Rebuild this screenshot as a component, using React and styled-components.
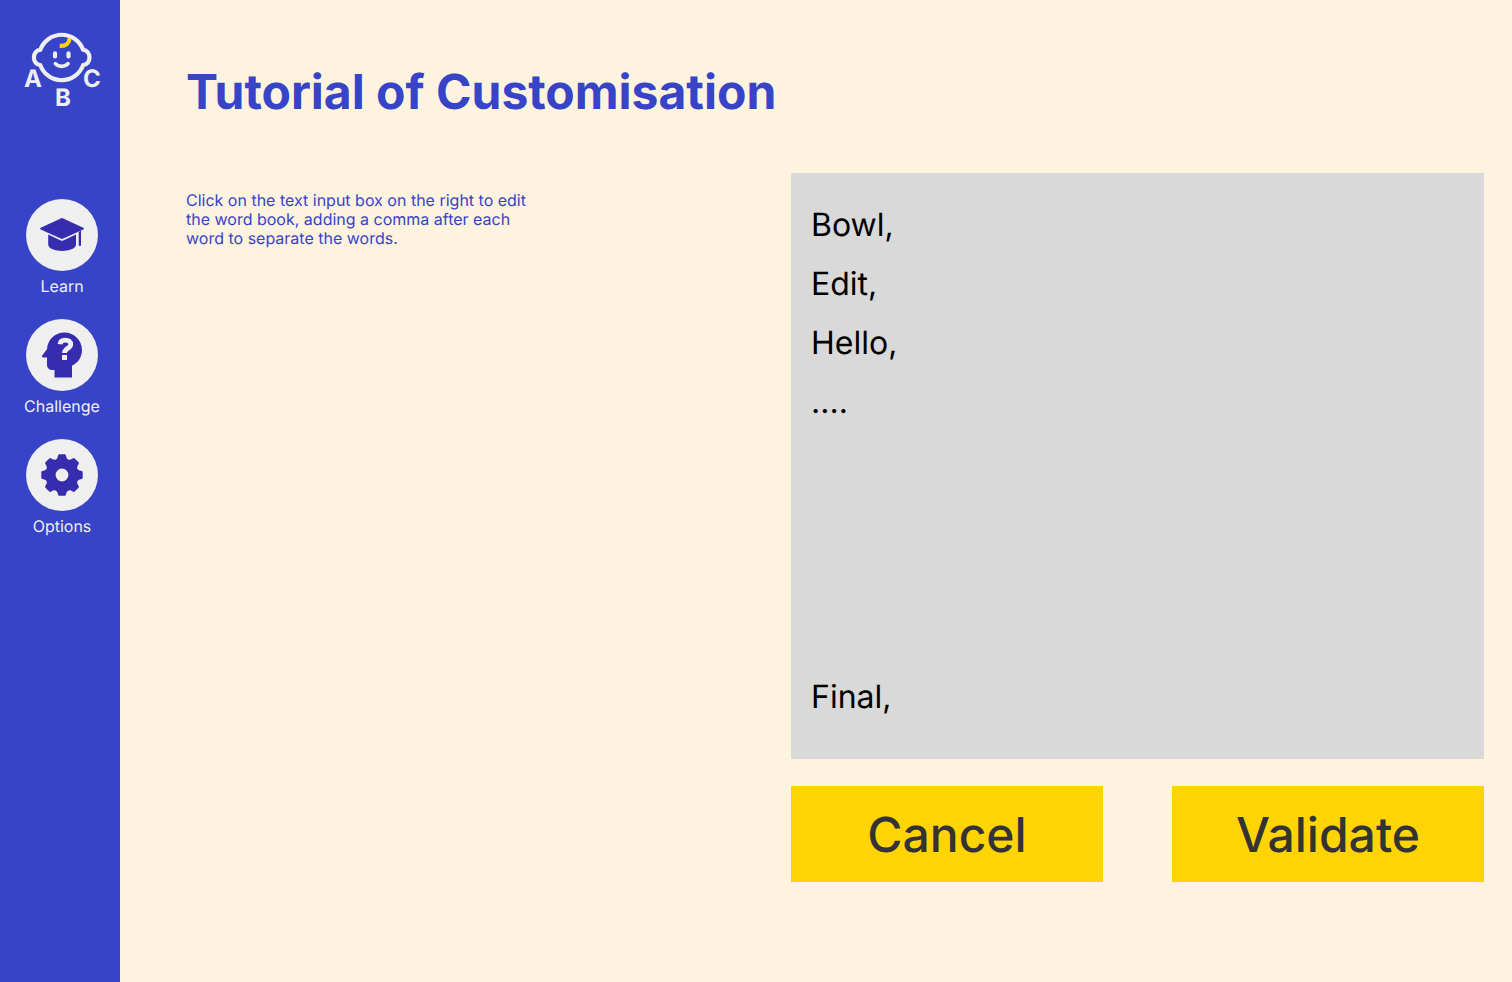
import React from "react";
import styled, { createGlobalStyle, ThemeProvider } from "styled-components";

const theme = {
  blue: "#3744c8",
  indigo: "#372cae",
  cream: "#fdf3df",
  light: "#efefef",
  grey: "#d9d9d9",
  yellow: "#ffd404",
  ink: "#333333",
};

const GlobalStyle = createGlobalStyle`
  *, *::before, *::after { box-sizing: border-box; }
  body {
    margin: 0;
    background: ${theme.cream};
    font-family: Inter, "Liberation Sans", sans-serif;
    text-rendering: geometricPrecision;
  }
`;

const Page = styled.div`
  display: flex;
  min-height: 100vh;
`;

const Sidebar = styled.aside`
  flex: 0 0 120px;
  display: flex;
  flex-direction: column;
  align-items: center;
  gap: 87px;
  padding: 28px 0 28px 4px;
  background: ${(p) => p.theme.blue};
`;

const LogoLink = styled.a`
  display: block;
  height: 84px;
`;

const Nav = styled.nav`
  display: flex;
  flex-direction: column;
  gap: 23px;
`;

const NavLink = styled.a`
  display: flex;
  flex-direction: column;
  align-items: center;
  gap: 6px;
  color: ${(p) => p.theme.light};
  font-size: 16px;
  line-height: 19px;
  text-decoration: none;
`;

const IconDisc = styled.span`
  display: flex;
  align-items: center;
  justify-content: center;
  width: 72px;
  height: 72px;
  border-radius: 50%;
  background: ${(p) => p.theme.light};
  color: ${(p) => p.theme.indigo};
`;

const Main = styled.main`
  flex: 1;
  min-width: 0;
  padding: 63px 28px 62px 66px;
`;

const Title = styled.h1`
  margin: 0 0 52px;
  color: ${(p) => p.theme.blue};
  font-size: 48px;
  font-weight: 700;
  line-height: 58px;
`;

const Form = styled.form`
  display: grid;
  grid-template-columns: 605fr 693fr;
`;

const Instructions = styled.label`
  max-width: 352px;
  padding-top: 18px;
  color: ${(p) => p.theme.blue};
  font-size: 16px;
  line-height: 19px;
`;

const Editor = styled.div`
  display: flex;
  flex-direction: column;
  gap: 27px;
`;

const WordBook = styled.textarea`
  display: block;
  width: 100%;
  height: 586px;
  padding: 22px 20px;
  border: 0;
  border-radius: 0;
  resize: none;
  background: ${(p) => p.theme.grey};
  color: #000;
  font-family: inherit;
  font-size: 32px;
  line-height: 59px;
  text-rendering: inherit;
`;

const Actions = styled.div`
  display: grid;
  grid-template-columns: 1fr 1fr;
  gap: 69px;
`;

const ActionButton = styled.button`
  height: 96px;
  padding: 2px 0 0;
  border: 0;
  background: ${(p) => p.theme.yellow};
  color: ${(p) => p.theme.ink};
  font-family: inherit;
  font-size: 48px;
  font-weight: 500;
  line-height: 58px;
  text-rendering: inherit;
  cursor: pointer;
`;

const LogoLetters = styled.g`
  fill: ${(p) => p.theme.light};
  font-size: 24px;
  font-weight: 700;
  text-anchor: middle;
`;

function Logo() {
  return (
    <svg width="84" height="84" viewBox="20 28 84 84" role="img" aria-label="ABC">
      <path d="M59.7 45.9h1.6c4.4 0 7.9-2.8 8.4-7.8" fill="none" stroke={theme.yellow} strokeWidth="4.2" />
      <g fill="none" stroke={theme.light} strokeWidth="4.2" strokeLinejoin="round" strokeLinecap="round">
        <path d="M40.3 49.9A22.7 22.7 0 0 1 83.1 49.9A6.4 7.6 0 0 1 83.1 65.1A22.7 22.7 0 0 1 40.3 65.1A6.4 7.6 0 0 1 40.3 49.9Z" />
        <path d="M55 53.4v3M68.5 53.4v3" />
        <path d="M55.4 63.8c3.2 3.3 9.4 3.3 12.6 0" strokeWidth="3.8" />
      </g>
      <LogoLetters>
        <text x="33" y="87">A</text>
        <text x="63" y="106">B</text>
        <text x="92" y="87">C</text>
      </LogoLetters>
    </svg>
  );
}

function LearnIcon() {
  return (
    <svg width="72" height="72" viewBox="0 0 72 72" fill="currentColor" aria-hidden="true">
      <path d="M35.3 19.2q.7-.3 1.4 0l20.6 9.6q1.4.8 0 1.6l-20.5 9.3q-.8.3-1.6 0l-20.5-9.3q-1.4-.8 0-1.6z" />
      <path d="M22.2 35.6l12.6 6q1.2.5 2.4 0l12.8-6v10.2c0 3.8-7.5 6.2-13.9 6.2s-13.9-2.4-13.9-6.2z" />
      <path d="M52.7 33l2.3-1.2v14.4q0 .8-1.1.8t-1.2-.8z" />
    </svg>
  );
}

function ChallengeIcon() {
  return (
    <svg width="60" height="60" viewBox="0 0 24 24" aria-hidden="true">
      <path
        fill="currentColor"
        d="M13 3C9.23 3 6.19 5.95 6 9.66l-1.92 2.53c-.24.31 0 .81.42.81H6v3c0 1.11.89 2 2 2h1v3h7v-4.69c2.37-1.12 4-3.51 4-6.31 0-3.86-3.12-7-7-7z"
      />
      <path fill="none" stroke={theme.light} strokeWidth="1.9" d="M11.2 7.7C11.3 6.6 12.1 6 13.3 6c1.3 0 2.2.7 2.2 1.8 0 1.5-2.5 1.6-2.5 3.4" />
      <path fill={theme.light} d="M12 12h2v2h-2z" />
    </svg>
  );
}

const GEAR_TEETH = 8;

// One tooth and the hollow after it, turned round the centre for each tooth.
function gearPath() {
  const at = (turn, x, y) => {
    const a = (turn * 2 * Math.PI) / GEAR_TEETH;
    const px = x * Math.cos(a) - y * Math.sin(a);
    const py = x * Math.sin(a) + y * Math.cos(a);
    return `${px.toFixed(2)} ${py.toFixed(2)}`;
  };
  let d = "";
  for (let i = 0; i < GEAR_TEETH; i += 1) {
    d += `${i === 0 ? "M" : "L"}${at(i, -3.9, -19.8)}`;
    d += `Q${at(i, -3.6, -20.7)} ${at(i, -2.7, -20.7)}`;
    d += `L${at(i, 2.7, -20.7)}`;
    d += `Q${at(i, 3.6, -20.7)} ${at(i, 3.9, -19.8)}`;
    d += `L${at(i, 4.5, -17.6)}`;
    d += `C${at(i, 5.2, -15.4)} ${at(i + 1, -5.2, -15.4)} ${at(i + 1, -4.5, -17.6)}`;
  }
  return `${d}ZM6.4 0A6.4 6.4 0 1 0-6.4 0A6.4 6.4 0 1 0 6.4 0Z`;
}

function OptionsIcon() {
  return (
    <svg width="44" height="44" viewBox="-22 -22 44 44" aria-hidden="true">
      <path fill="currentColor" fillRule="evenodd" d={gearPath()} />
    </svg>
  );
}

const sections = [
  { name: "Learn", href: "#learn", Icon: LearnIcon },
  { name: "Challenge", href: "#challenge", Icon: ChallengeIcon },
  { name: "Options", href: "#options", Icon: OptionsIcon },
];

const words = "Bowl,\nEdit,\nHello,\n....\n\n\n\n\nFinal,";

export default function App() {
  return (
    <ThemeProvider theme={theme}>
      <GlobalStyle />
      <Page>
        <Sidebar>
          <LogoLink href="#home">
            <Logo />
          </LogoLink>
          <Nav>
            {sections.map(({ name, href, Icon }) => (
              <NavLink key={name} href={href}>
                <IconDisc>
                  <Icon />
                </IconDisc>
                {name}
              </NavLink>
            ))}
          </Nav>
        </Sidebar>
        <Main>
          <Title>Tutorial of Customisation</Title>
          <Form onSubmit={(e) => e.preventDefault()}>
            <Instructions htmlFor="word-book">
              Click on the text input box on the right to edit the word book, adding a comma after each word to separate the words.
            </Instructions>
            <Editor>
              <WordBook id="word-book" defaultValue={words} spellCheck={false} />
              <Actions>
                <ActionButton type="button">Cancel</ActionButton>
                <ActionButton type="submit">Validate</ActionButton>
              </Actions>
            </Editor>
          </Form>
        </Main>
      </Page>
    </ThemeProvider>
  );
}
